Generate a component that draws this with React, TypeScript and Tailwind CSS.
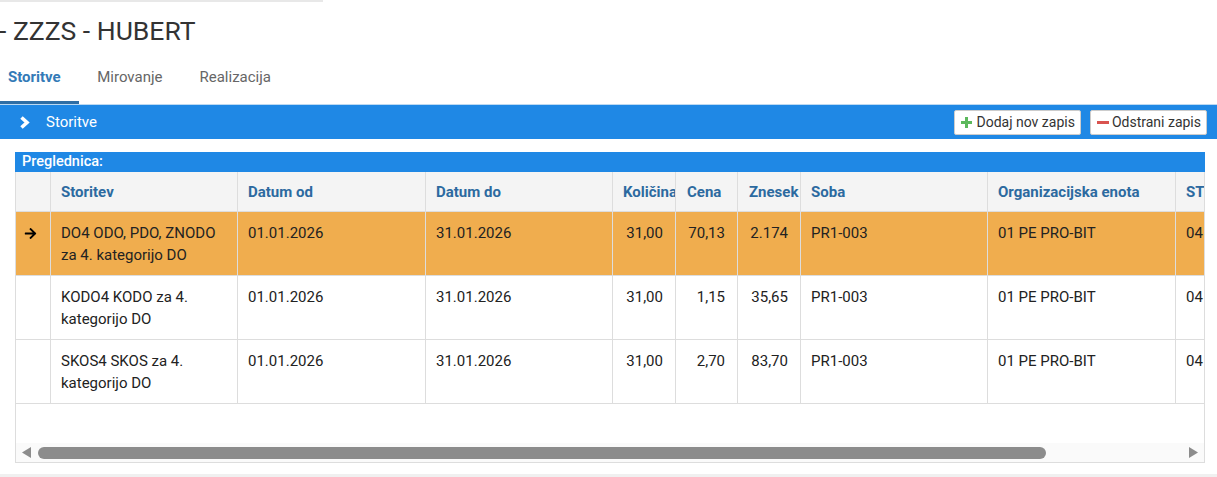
import { FaArrowRight } from "react-icons/fa";

type Row = {
  storitev: string;
  od: string;
  do: string;
  kolicina: string;
  cena: string;
  znesek: string;
  soba: string;
  enota: string;
  st: string;
  active?: boolean;
};

const rows: Row[] = [
  {
    storitev: "DO4 ODO, PDO, ZNODO za 4. kategorijo DO",
    od: "01.01.2026",
    do: "31.01.2026",
    kolicina: "31,00",
    cena: "70,13",
    znesek: "2.174",
    soba: "PR1-003",
    enota: "01 PE PRO-BIT",
    st: "04",
    active: true,
  },
  {
    storitev: "KODO4 KODO za 4. kategorijo DO",
    od: "01.01.2026",
    do: "31.01.2026",
    kolicina: "31,00",
    cena: "1,15",
    znesek: "35,65",
    soba: "PR1-003",
    enota: "01 PE PRO-BIT",
    st: "04",
  },
  {
    storitev: "SKOS4 SKOS za 4. kategorijo DO",
    od: "01.01.2026",
    do: "31.01.2026",
    kolicina: "31,00",
    cena: "2,70",
    znesek: "83,70",
    soba: "PR1-003",
    enota: "01 PE PRO-BIT",
    st: "04",
  },
];

const headers = [
  { label: "", w: "w-[35px]" },
  { label: "Storitev", w: "w-[187px]" },
  { label: "Datum od", w: "w-[188px]" },
  { label: "Datum do", w: "w-[187px]" },
  { label: "Količina", w: "w-[63px]" },
  { label: "Cena", w: "w-[62px]" },
  { label: "Znesek", w: "w-[63px]" },
  { label: "Soba", w: "w-[187px]" },
  { label: "Organizacijska enota", w: "w-[188px]" },
  { label: "ST", w: "w-[100px]" },
];

const cell = "shrink-0 border-r border-[#dddddd] pl-[10px] pr-[11px] pt-[10px] leading-[22px] overflow-hidden";
const num = "shrink-0 border-r border-[#dddddd] pr-[12px] pt-[10px] leading-[22px] text-right overflow-hidden";

export default function App() {
  return (
    <div className="w-[1217px] h-[477px] overflow-hidden bg-white font-['Roboto',sans-serif] flex flex-col">
      <div className="h-[2px] w-[323px] bg-[#e8e8e8]" />

      {/* Title */}
      <div className="h-[56px] pt-[2px] flex items-center text-[26.5px] text-[#333333] -ml-[1px] whitespace-nowrap">
        - ZZZS - HUBERT
      </div>

      {/* Tabs */}
      <div className="h-[46px] flex text-[15px]">
        <div className="h-full flex items-center pl-[8px] pr-[18px] pb-[5px] font-bold text-[#337ab7] border-b-[3px] border-[#2f6ea5]">
          Storitve
        </div>
        <div className="h-full flex items-center px-[18.5px] pb-[8px] text-[#666666]">Mirovanje</div>
        <div className="h-full flex items-center px-[18.5px] pb-[8px] text-[#666666]">Realizacija</div>
      </div>
      <div className="h-px bg-[#bcd9f2]" />

      {/* Blue bar */}
      <div className="h-[34px] bg-[#1f88e5] flex items-center pl-[19px] pr-[10px]">
        <svg width="11" height="13" viewBox="0 0 11 13">
          <path d="M2.5 1.5 L8 6.5 L2.5 11.5" stroke="white" strokeWidth="3.6" fill="none" strokeLinejoin="miter" />
        </svg>
        <span className="ml-[16px] text-white text-[15px]">Storitve</span>
        <div className="ml-auto flex gap-[9px]">
          <button className="h-[25px] pl-[6px] pr-[5px] flex items-center gap-[4px] bg-white border border-[#cccccc] rounded-[2px] text-[14px] text-[#333333]">
            <svg width="11" height="11" viewBox="0 0 11 11">
              <path d="M4 0h3v4h4v3H7v4H4V7H0V4h4z" fill="#5cb85c" />
            </svg>
            Dodaj nov zapis
          </button>
          <button className="h-[25px] pl-[6px] pr-[5px] flex items-center gap-[3px] bg-white border border-[#cccccc] rounded-[2px] text-[14px] text-[#333333]">
            <svg width="12" height="11" viewBox="0 0 12 11">
              <rect x="0" y="4" width="12" height="3" fill="#d9534f" />
            </svg>
            Odstrani zapis
          </button>
        </div>
      </div>

      {/* Grid panel */}
      <div className="mt-[13px] mx-[15px] w-[1190px]">
        <div className="h-[20px] bg-[#1f88e5] text-white text-[14.5px] font-medium leading-[20px] pl-[7px]">
          Preglednica:
        </div>
        <div className="border-x border-b border-[#dddddd] overflow-hidden">
          <div className="w-[1260px]">
            {/* Header */}
            <div className="flex h-[40px] bg-[#f4f4f4] border-b border-[#dddddd] text-[15px] font-bold text-[#2c6aa0]">
              {headers.map((h, i) => (
                <div
                  key={i}
                  className={`${h.w} shrink-0 border-r border-[#dddddd] flex items-center pt-[1px] whitespace-nowrap overflow-hidden ${
                    i >= 5 && i <= 6 ? "pl-[11px]" : "pl-[10px]"
                  }`}
                >
                  {h.label}
                </div>
              ))}
            </div>

            {/* Rows */}
            {rows.map((r, i) => (
              <div
                key={i}
                className={`flex h-[64px] border-b border-[#dddddd] text-[15px] text-[#222222] ${
                  r.active ? "bg-[#f0ad4e]" : "bg-white"
                }`}
              >
                <div className="w-[35px] shrink-0 border-r border-[#dddddd] pt-[15px] pl-[8px]">
                  {r.active && <FaArrowRight className="w-[13px] h-[13px] text-black" />}
                </div>
                <div className={`w-[187px] ${cell}`}>{r.storitev}</div>
                <div className={`w-[188px] ${cell}`}>{r.od}</div>
                <div className={`w-[187px] ${cell}`}>{r.do}</div>
                <div className={`w-[63px] ${num}`}>{r.kolicina}</div>
                <div className={`w-[62px] ${num}`}>{r.cena}</div>
                <div className={`w-[63px] ${num}`}>{r.znesek}</div>
                <div className={`w-[187px] ${cell}`}>{r.soba}</div>
                <div className={`w-[188px] ${cell}`}>{r.enota}</div>
                <div className={`w-[100px] ${cell}`}>{r.st}</div>
              </div>
            ))}
          </div>

          <div className="h-[39px]" />

          {/* Horizontal scrollbar */}
          <div className="h-[19px] bg-[#fafafa] flex items-center pl-[6px] pr-[6px]">
            <svg width="9" height="11" viewBox="0 0 9 11">
              <path d="M9 0 L0 5.5 L9 11 Z" fill="#8c8c8c" />
            </svg>
            <div className="ml-[7px] w-[1008px] h-[12px] rounded-[6px] bg-[#8c8c8c]" />
            <svg className="ml-auto" width="9" height="11" viewBox="0 0 9 11">
              <path d="M0 0 L9 5.5 L0 11 Z" fill="#8c8c8c" />
            </svg>
          </div>
        </div>
      </div>

      <div className="mt-auto h-[3px] bg-[#f0f0f0]" />
    </div>
  );
}
